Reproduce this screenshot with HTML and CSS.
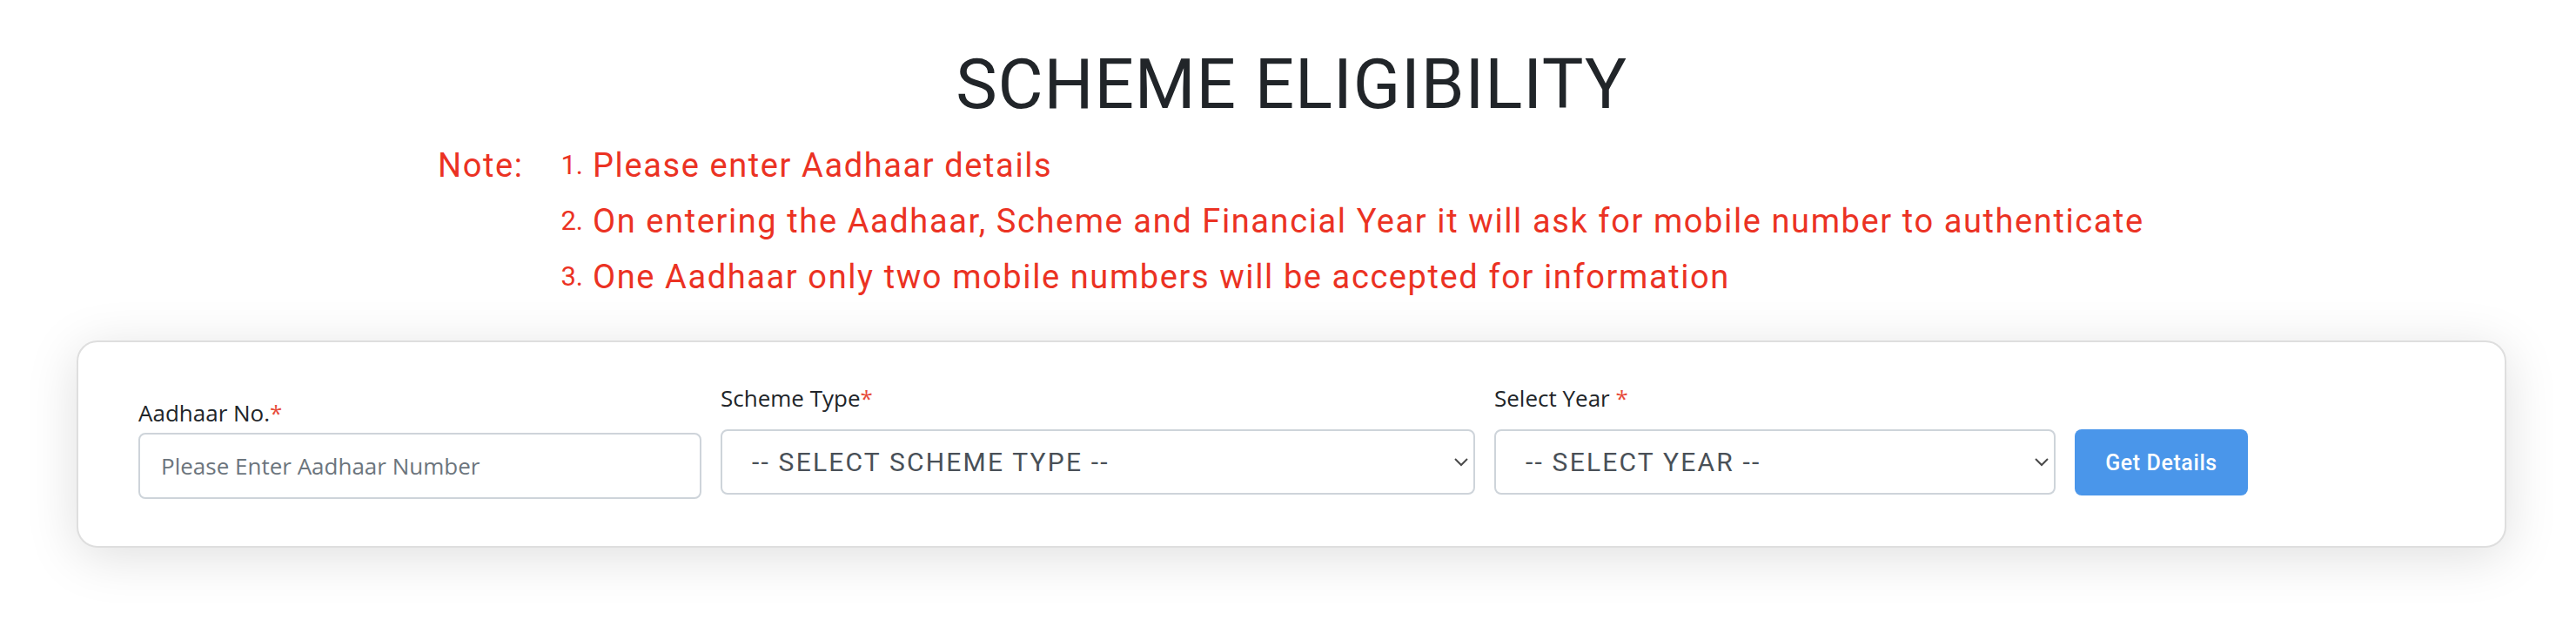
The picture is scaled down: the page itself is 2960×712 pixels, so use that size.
FILE: index.html
```html
<!DOCTYPE html>
<html lang="en">
<head>
<meta charset="utf-8">
<title>Scheme Eligibility</title>
<link rel="stylesheet" href="styles.css">
</head>
<body>
<main class="page">
  <h1 class="title">SCHEME ELIGIBILITY</h1>
  <div class="note">
    <span class="note-label">Note:</span>
    <ol class="note-list">
      <li><span class="num">1.</span><span>Please enter Aadhaar details</span></li>
      <li><span class="num">2.</span><span>On entering the Aadhaar, Scheme and Financial Year it will ask for mobile number to authenticate</span></li>
      <li><span class="num">3.</span><span>One Aadhaar only two mobile numbers will be accepted for information</span></li>
    </ol>
  </div>
  <section class="card">
    <form class="form-row">
      <div class="field field-aadhaar">
        <label class="label" for="aadhaar">Aadhaar No.<span class="req">*</span></label>
        <input class="input" id="aadhaar" type="text" placeholder="Please Enter Aadhaar Number">
      </div>
      <div class="field">
        <label class="label" for="scheme">Scheme Type<span class="req">*</span></label>
        <div class="select-wrap">
          <select class="select" id="scheme">
            <option>-- SELECT SCHEME TYPE --</option>
          </select>
          <svg class="chevron" width="16" height="10" viewBox="0 0 16 10"><polyline points="1,1 8,8 15,1" fill="none" stroke="#4a4a4a" stroke-width="2"/></svg>
        </div>
      </div>
      <div class="field">
        <label class="label" for="year">Select Year <span class="req">*</span></label>
        <div class="select-wrap">
          <select class="select" id="year">
            <option>-- SELECT YEAR --</option>
          </select>
          <svg class="chevron" width="16" height="10" viewBox="0 0 16 10"><polyline points="1,1 8,8 15,1" fill="none" stroke="#4a4a4a" stroke-width="2"/></svg>
        </div>
      </div>
      <div class="field field-btn">
        <button class="btn" type="button">Get Details</button>
      </div>
    </form>
  </section>
</main>
</body>
</html>
```
FILE: styles.css
```css
* { box-sizing: border-box; }
html, body { margin: 0; padding: 0; background: #fff; }
body { font-family: "Open Sans", "Liberation Sans", sans-serif; color: #212529; }

.page {
  padding: 0 80px 80px 88px;
}

.title {
  margin: 49px 0 0;
  font-family: Roboto, "Liberation Sans", sans-serif;
  font-weight: 400;
  font-size: 80px;
  line-height: 96px;
  letter-spacing: 0.9px;
  text-align: center;
  color: #212529;
}

.note {
  display: flex;
  margin: 13px 0 0 415px;
  font-family: Roboto, "Liberation Sans", sans-serif;
  font-size: 38px;
  line-height: 64px;
  letter-spacing: 1.6px;
  color: #eb3223;
}
.note-label { width: 131px; flex: none; }
.note-list { list-style: none; margin: 0; padding: 0; }
.note-list li { display: flex; }
.num {
  width: 36px;
  flex: none;
  text-align: right;
  margin-right: 11px;
  font-size: 31px;
  letter-spacing: 0;
}

.card {
  margin-top: 41px;
  border: 2px solid #dedede;
  border-radius: 24px;
  background: #fff;
  box-shadow: 0 10px 60px rgba(0, 0, 0, 0.13);
  padding: 46px 40px 54px 69px;
}

.form-row {
  display: grid;
  grid-template-columns: 647px 867px 645px auto;
  column-gap: 22px;
  align-items: start;
  margin: 0;
}

.field { display: flex; flex-direction: column; }
.field-aadhaar { padding-top: 17px; }
.field-btn { padding-top: 54px; }

.label {
  font-size: 26px;
  line-height: 36px;
  color: #212529;
  margin-bottom: 18px;
}
.field-aadhaar .label { margin-bottom: 5px; }
.req { color: #e74c3c; }

.input {
  height: 76px;
  border: 2px solid #ced4da;
  border-radius: 8px;
  padding: 0 24px;
  font-family: "Open Sans", "Liberation Sans", sans-serif;
  font-size: 26px;
  color: #495057;
  background: #fff;
  outline: none;
}
.input::placeholder { color: #6c757d; opacity: 1; }

.select-wrap { position: relative; }
.select {
  -webkit-appearance: none;
  appearance: none;
  width: 100%;
  height: 75px;
  border: 2px solid #ced4da;
  border-radius: 8px;
  padding: 0 40px 0 34px;
  background: #fff;
  font-family: Roboto, "Liberation Sans", sans-serif;
  font-size: 30px;
  letter-spacing: 2.2px;
  color: #495057;
  outline: none;
}
.chevron {
  position: absolute;
  right: 8px;
  top: 33px;
  pointer-events: none;
}

.btn {
  width: 199px;
  height: 76px;
  border: none;
  border-radius: 8px;
  background: #4a96ea;
  color: #fff;
  font-family: Roboto, "Liberation Sans", sans-serif;
  font-size: 25px;
  font-weight: 500;
  letter-spacing: 0.6px;
  padding: 0;
}
```
